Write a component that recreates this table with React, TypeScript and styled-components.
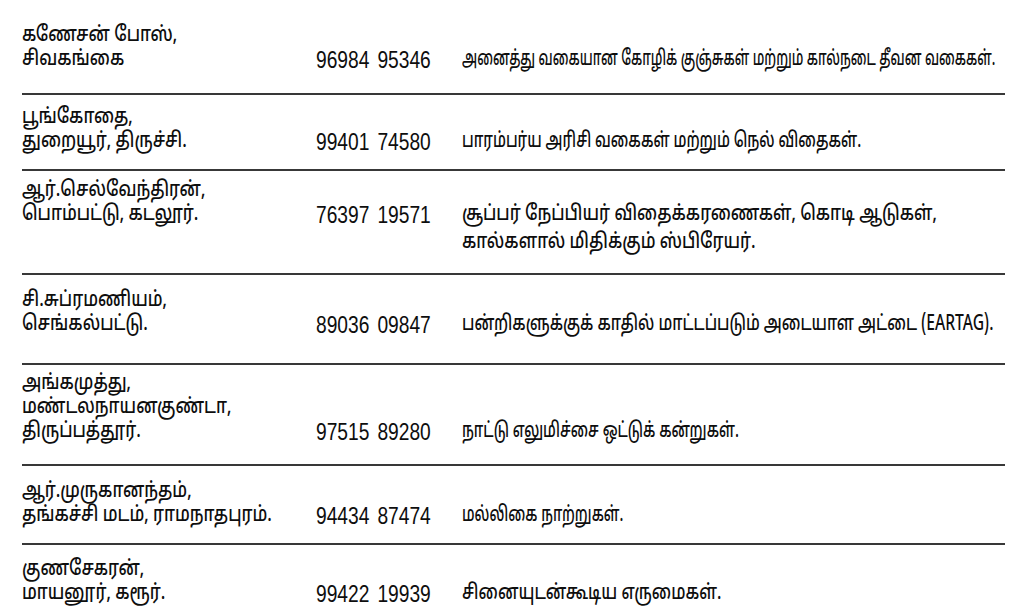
import React from 'react';
import styled, {createGlobalStyle} from 'styled-components';

const GlobalStyle = createGlobalStyle`
  html, body {
    margin: 0;
    padding: 0;
    background: #fff;
    overflow: hidden;
  }
  body {
    font-family: "Noto Sans Tamil", "Noto Sans Tamil UI", "Lohit Tamil", "Noto Sans", sans-serif;
    color: #0e0e0e;
  }
`;

interface IEntry {
  name: string[];
  phone: [string, string];
  desc: string[];
  sx: number; // squeeze of the description, the print set each one to its own width
  pt: number;
  pb: number;
}

const entries: IEntry[] = [
  {
    name: ['கணேசன் போஸ்,', 'சிவகங்கை'],
    phone: ['96984', '95346'],
    desc: ['அனைத்து வகையான கோழிக் குஞ்சுகள் மற்றும் கால்நடை தீவன வகைகள்.'],
    sx: 0.628,
    pt: 24,
    pb: 21
  },
  {
    name: ['பூங்கோதை,', 'துறையூர், திருச்சி.'],
    phone: ['99401', '74580'],
    desc: ['பாரம்பர்ய அரிசி வகைகள் மற்றும் நெல் விதைகள்.'],
    sx: 0.7,
    pt: 11,
    pb: 15
  },
  {
    name: ['ஆர்.செல்வேந்திரன்,', 'பொம்பட்டு, கடலூர்.'],
    phone: ['76397', '19571'],
    desc: [
      'சூப்பர் நேப்பியர் விதைக்கரணைகள், கொடி ஆடுகள்,',
      'கால்களால் மிதிக்கும் ஸ்பிரேயர்.'
    ],
    sx: 0.8,
    pt: 8,
    pb: 18
  },
  {
    name: ['சி.சுப்ரமணியம்,', 'செங்கல்பட்டு.'],
    phone: ['89036', '09847'],
    desc: ['பன்றிகளுக்குக் காதில் மாட்டப்படும் அடையாள அட்டை (EARTAG).'],
    sx: 0.745,
    pt: 14,
    pb: 26
  },
  {
    name: ['அங்கமுத்து,', 'மண்டலநாயனகுண்டா,', 'திருப்பத்தூர்.'],
    phone: ['97515', '89280'],
    desc: ['நாட்டு எலுமிச்சை ஒட்டுக் கன்றுகள்.'],
    sx: 0.69,
    pt: 7,
    pb: 20
  },
  {
    name: ['ஆர்.முருகானந்தம்,', 'தங்கச்சி மடம், ராமநாதபுரம்.'],
    phone: ['94434', '87474'],
    desc: ['மல்லிகை நாற்றுகள்.'],
    sx: 0.68,
    pt: 14,
    pb: 15
  },
  {
    name: ['குணசேகரன்,', 'மாயனூர், கரூர்.'],
    phone: ['99422', '19939'],
    desc: ['சினையுடன்கூடிய எருமைகள்.'],
    sx: 0.77,
    pt: 13,
    pb: 14
  }
];

// the print face is a condensed Tamil; squeeze the installed one to match
const NAME_SX = 0.8;

export default function App() {
  return (
    <>
      <GlobalStyle />
      <Table>
        {entries.map((e, i) => {
          const head = e.name.slice(0, -1);
          const last = e.name[e.name.length - 1];
          return (
            <Row key={i} $pt={e.pt} $pb={e.pb} $last={i === entries.length - 1}>
              {head.map((n, j) => (
                <Line key={j}>
                  <Squeeze $sx={NAME_SX}>{n}</Squeeze>
                </Line>
              ))}
              <MainLine>
                <Line>
                  <Squeeze $sx={NAME_SX}>{last}</Squeeze>
                </Line>
                <Phone>
                  <span>{e.phone[0]}</span>
                  <span>{e.phone[1]}</span>
                </Phone>
                <Desc>
                  {e.desc.map((d, k) => (
                    <Line key={k}>
                      <Squeeze $sx={e.sx}>{d}</Squeeze>
                    </Line>
                  ))}
                </Desc>
              </MainLine>
            </Row>
          );
        })}
      </Table>
    </>
  );
}

const Table = styled.div`
  width: 983px;
  margin-left: 22px;
  display: flex;
  flex-direction: column;
`;

const Row = styled.div<{$pt: number; $pb: number; $last: boolean}>`
  padding-top: ${({$pt}) => $pt}px;
  padding-bottom: ${({$pb}) => $pb}px;
  border-bottom: ${({$last}) => ($last ? 'none' : '2px solid #383838')};
  display: flex;
  flex-direction: column;
`;

const Line = styled.div`
  font-size: 21px;
  font-weight: 500;
  line-height: 24px;
  white-space: nowrap;
`;

const Squeeze = styled.span<{$sx: number}>`
  display: inline-block;
  transform: scaleX(${({$sx}) => $sx});
  transform-origin: left center;
`;

const MainLine = styled.div`
  display: grid;
  grid-template-columns: 294px 146px 1fr;
  align-items: start;
`;

const Phone = styled.div`
  display: flex;
  gap: 10px;
  font-family: "Liberation Sans", Arial, sans-serif;
  font-size: 24px;
  line-height: 24px;
  transform: scaleX(0.8);
  transform-origin: left center;
`;

const Desc = styled.div`
  display: flex;
  flex-direction: column;
  gap: 4px;
`;
